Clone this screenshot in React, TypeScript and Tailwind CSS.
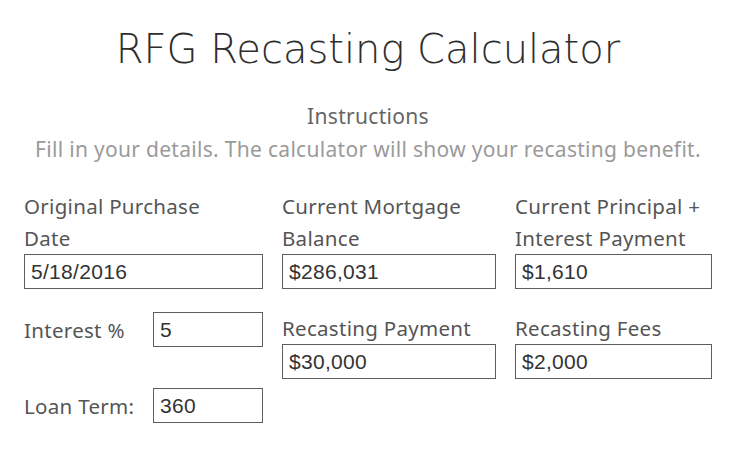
export default function App() {
  const font = { fontFamily: '"Noto Sans", "Open Sans", sans-serif' };
  return (
    <div className="w-[736px] h-[454px] bg-white overflow-hidden" style={font}>
      <div className="pt-[24px] flex flex-col items-center">
        <h1
          className="text-[40px] leading-[50px] font-extralight text-[#2e2e2e]"
          style={{ fontFamily: '"DejaVu Sans", "Noto Sans", sans-serif' }}
        >
          RFG Recasting Calculator
        </h1>
        <div className="mt-[26px] text-[21px] leading-[33px] tracking-[0.3px] text-[#666666]">Instructions</div>
        <div className="text-[21px] leading-[33px] tracking-[0.3px] text-[#9a9a9a]">
          Fill in your details. The calculator will show your recasting benefit.
        </div>
      </div>

      <div className="mt-[24px] px-[24px] grid grid-cols-[239px_214px_197px] gap-x-[19px] text-[20.5px] leading-[32px] tracking-[0.3px] text-[#555555]">
        <Field label="Original Purchase Date" value="5/18/2016" labelWidth="max-w-[200px]" />
        <Field label="Current Mortgage Balance" value="$286,031" />
        <Field label="Current Principal + Interest Payment" value="$1,610" />

        <div className="mt-[23px] flex flex-col gap-[41px]">
          <InlineField label="Interest %" value="5" />
          <InlineField label="Loan Term:" value="360" />
        </div>
        <div className="mt-[23px]">
          <Field label="Recasting Payment" value="$30,000" />
        </div>
        <div className="mt-[23px]">
          <Field label="Recasting Fees" value="$2,000" />
        </div>
      </div>
    </div>
  );
}

function Box({ value, className = "" }: { value: string; className?: string }) {
  return (
    <div
      className={`h-[35px] border-[1.5px] border-[#5e5e5e] pl-[6px] flex items-center text-[21px] text-[#333333] ${className}`}
      style={{ fontFamily: '"Liberation Sans", Arial, sans-serif' }}
    >
      {value}
    </div>
  );
}

function Field({ label, value, labelWidth = "" }: { label: string; value: string; labelWidth?: string }) {
  return (
    <div className="flex flex-col">
      <div className={labelWidth}>{label}</div>
      <Box value={value} />
    </div>
  );
}

function InlineField({ label, value }: { label: string; value: string }) {
  return (
    <div className="flex items-center">
      <div className="w-[129px]">{label}</div>
      <Box value={value} className="w-[110px]" />
    </div>
  );
}
